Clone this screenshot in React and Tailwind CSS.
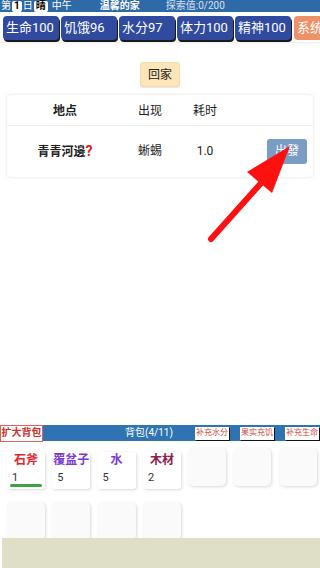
export default function App() {
  const stats = ["生命100", "饥饿96", "水分97", "体力100", "精神100"];
  const items = [
    { name: "石斧", n: 1, c: "text-[#e8232b]", bar: true },
    { name: "覆盆子", n: 5, c: "text-[#7a3bd4]" },
    { name: "水", n: 5, c: "text-[#7a3bd4]" },
    { name: "木材", n: 2, c: "text-[#8a1d4c]" },
  ];
  const font = { fontFamily: 'Roboto, "Noto Sans CJK SC", sans-serif' };
  return (
    <div className="relative w-[320px] h-[568px] bg-white overflow-hidden flex flex-col" style={font}>
      {/* top bar */}
      <div className="h-[12px] bg-[#2f6aa8] flex items-center text-white text-[10px] leading-none whitespace-nowrap">
        <span className="ml-[1px]">第</span>
        <span className="mx-[1px] px-[2px] h-[11px] bg-white text-black rounded-[2px] font-bold flex items-center">1</span>
        <span>日</span>
        <span className="ml-[1px] px-[2px] h-[11px] bg-white text-black rounded-[2px] font-bold flex items-center">晴</span>
        <span className="ml-[4px]">中午</span>
        <span className="ml-[28px] font-bold">温馨的家</span>
        <span className="ml-[26px] text-[#d6e2f0]">探索值:0/200</span>
      </div>
      {/* stats */}
      <div className="h-[30px] flex items-start gap-[2px] pl-[3px] pt-[4px] bg-white shadow-[0_1px_2px_rgba(0,0,0,0.08)] overflow-hidden">
        {stats.map((s) => (
          <div key={s} className="w-[56px] h-[24px] shrink-0 rounded-[4px] bg-[#2f4a9e] text-white text-[13px] flex items-center pl-[3px] shadow-[1px_2px_0_#1a1a1a] whitespace-nowrap">
            {s}
          </div>
        ))}
        <div className="w-[26px] h-[24px] shrink-0 rounded-l-[4px] bg-[#ee9068] text-white text-[13px] flex items-center pl-[3px] ml-[1px] overflow-hidden whitespace-nowrap">
          系统
        </div>
      </div>
      {/* content */}
      <div className="flex justify-center mt-[20px]">
        <div className="w-[40px] h-[25px] rounded-[3px] bg-[#fde5b9] border border-[#f1dcb4] text-[12px] text-[#222] flex items-center justify-center shadow-[0_1px_1px_rgba(0,0,0,0.1)]">
          回家
        </div>
      </div>
      <div className="mx-[7px] mt-[8px] h-[82px] rounded-[4px] bg-white shadow-[0_0_3px_rgba(0,0,0,0.15)] text-[12px] text-[#222]">
        <div className="h-[31px] flex items-center border-b border-[#efefef] pt-[2px]">
          <div className="w-[116px] text-center font-bold">地点</div>
          <div className="w-[54px] text-center">出现</div>
          <div className="w-[56px] text-center">耗时</div>
        </div>
        <div className="h-[50px] flex items-center">
          <div className="w-[116px] text-center font-bold">青青河邊<span className="text-[#e02020] text-[14px]">?</span></div>
          <div className="w-[54px] text-center">蜥蜴</div>
          <div className="w-[56px] text-center">1.0</div>
          <div className="flex-1 flex justify-end pr-[6px]">
            <div className="w-[40px] h-[25px] rounded-[3px] bg-[#7b9cc4] text-white text-[12px] flex items-center justify-center">出發</div>
          </div>
        </div>
      </div>
      <div className="flex-1" />
      {/* bag header */}
      <div className="h-[16px] bg-[#2f73b3] flex items-center text-[10px] leading-none whitespace-nowrap">
        <div className="shrink-0 w-[43px] h-[17px] bg-white border border-[#e06060] text-[#d0302a] font-bold flex items-center justify-center">扩大背包</div>
        <div className="shrink-0 w-[152px] pl-[82px] text-white text-[10px]">背包(4/11)</div>
        <div className="shrink-0 w-[34px] h-[13px] bg-white text-[#d04a3a] text-[8px] flex items-center justify-center shadow-[1px_1px_0_#111]">补充水分</div>
        <div className="shrink-0 ml-[11px] w-[34px] h-[13px] bg-white text-[#d04a3a] text-[8px] flex items-center justify-center shadow-[1px_1px_0_#111]">果实充饥</div>
        <div className="shrink-0 ml-[11px] w-[34px] h-[13px] bg-white text-[#d04a3a] text-[8px] flex items-center justify-center shadow-[1px_1px_0_#111]">补充生命</div>
      </div>
      {/* items */}
      <div className="pl-[7px] pt-[7px] h-[97px]">
        <div className="grid grid-cols-[repeat(7,38px)] gap-x-[7.3px] gap-y-[13px] items-start">
          {items.map((it) => (
            <div key={it.name} className="mt-[4px] w-[38px] h-[37px] rounded-[3px] bg-white shadow-[1px_1px_3px_rgba(0,0,0,0.15)] relative">
              <div className={`text-center text-[12px] font-bold leading-none pt-[2px] whitespace-nowrap ${it.c}`}>{it.name}</div>
              <div className="pl-[5px] pt-[6px] text-[11px] text-[#333] leading-none">{it.n}</div>
              {it.bar && <div className="absolute left-[3px] right-[3px] bottom-[2px] h-[3px] rounded-full bg-[#3fa33f]" />}
            </div>
          ))}
          {Array.from({ length: 7 }).map((_, i) => (
            <div key={i} className="w-[38px] h-[38px] rounded-[5px] bg-[#fafafa] shadow-[1px_1px_3px_rgba(0,0,0,0.15)]" />
          ))}
        </div>
      </div>
      <div className="h-[30px] ml-[2px] bg-[#dfdfc7]" />
      {/* arrow overlay */}
      <svg className="absolute left-0 top-0 pointer-events-none" width="320" height="568">
        <line x1="211" y1="239" x2="262" y2="182" stroke="#ff1010" strokeWidth="6" strokeLinecap="round" />
        <polygon points="290,146 247,172 272,193" fill="#ff1010" />
      </svg>
    </div>
  );
}
